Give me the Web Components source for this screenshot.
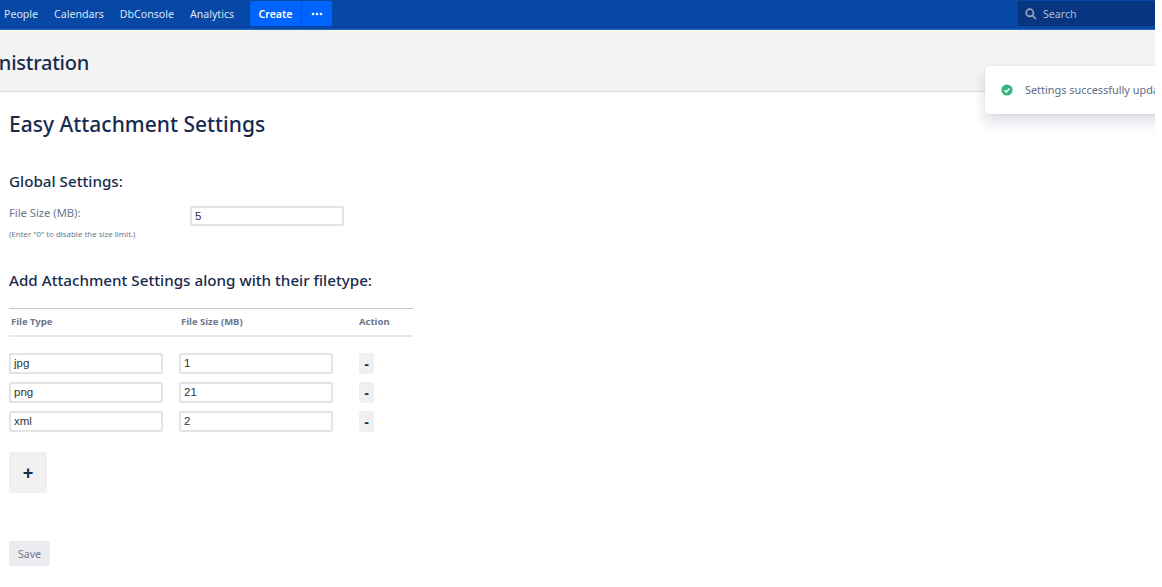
<!DOCTYPE html>
<html>
<head>
<meta charset="utf-8">
<title>Easy Attachment Settings</title>
<style>
  html, body { margin: 0; height: 100%; background: #fff; }
  body { font-family: "Noto Sans", "Open Sans", "Liberation Sans", sans-serif; color: #172b4d; overflow: hidden; }
  #clip { width: 1155px; height: 587px; overflow: hidden; position: relative; }
</style>
</head>
<body>
<div id="clip">
  <top-nav></top-nav>
  <page-header>Administration</page-header>
  <settings-page>
    <attachment-row slot="rows" type="jpg" size="1"></attachment-row>
    <attachment-row slot="rows" type="png" size="21"></attachment-row>
    <attachment-row slot="rows" type="xml" size="2"></attachment-row>
  </settings-page>
  <toast-flag>Settings successfully updated</toast-flag>
</div>

<script>
class TopNav extends HTMLElement {
  constructor() {
    super();
    this.attachShadow({mode: 'open'});
    this.shadowRoot.innerHTML = `
    <style>
      :host { display: flex; align-items: stretch; height: 30px; padding: 1px 0 0 4px; box-sizing: border-box;
        background: #0747a6; border-bottom: 1px solid #2a6ac4; font-size: 10.6px; color: #dce6f5; }
      .links { display: flex; gap: 16px; align-items: center; height: 26px; }
      .create { display: flex; margin-left: 16px; height: 25px; border-radius: 2px; overflow: hidden; background: #0065ff; color: #fff; font-weight: 600; }
      .create span { display: flex; align-items: center; justify-content: center; padding-top: 1px; box-sizing: border-box; }
      .create .main { width: 52px; border-right: 1px solid #0a56c8; }
      .create .more { width: 30px; }
      .search { margin-left: auto; width: 137px; height: 25px; background: #07357f; display: flex; align-items: center; gap: 6px; padding: 1px 0 0 7px; box-sizing: border-box; color: #aebdd6; }
    </style>
    <div class="links"><span>People</span><span>Calendars</span><span>DbConsole</span><span>Analytics</span></div>
    <div class="create">
      <span class="main">Create</span>
      <span class="more"><svg width="12" height="4" viewBox="0 0 12 4"><circle cx="2" cy="2" r="1.3" fill="#fff"/><circle cx="6" cy="2" r="1.3" fill="#fff"/><circle cx="10" cy="2" r="1.3" fill="#fff"/></svg></span>
    </div>
    <div class="search">
      <svg width="12" height="12" viewBox="0 0 12 12" fill="none" stroke="#95a5c0" stroke-width="1.7"><circle cx="4.8" cy="4.8" r="3.6"/><path d="M7.6 7.6 L11 11"/></svg>
      <span>Search</span>
    </div>`;
  }
}

class PageHeader extends HTMLElement {
  constructor() {
    super();
    this.attachShadow({mode: 'open'});
    this.shadowRoot.innerHTML = `
    <style>
      :host { display: flex; align-items: center; height: 62px; box-sizing: border-box; background: #f4f4f4; border-bottom: 1px solid #dcdcdc; overflow: hidden; white-space: nowrap; }
      h1 { margin: 3px 0 0 -50px; font-size: 20px; font-weight: 500; letter-spacing: -.25px; color: #172b4d; }
    </style>
    <h1><slot></slot></h1>`;
  }
}

class AttachmentRow extends HTMLElement {
  constructor() {
    super();
    this.attachShadow({mode: 'open'});
    this.shadowRoot.innerHTML = `
    <style>
      :host { display: flex; align-items: flex-start; height: 29px; }
      input { width: 154px; height: 21px; box-sizing: border-box; margin: 0; padding: 0 3px 1px; border: 2px solid #e3e4ea; border-radius: 2px;
        font: 11.5px "Liberation Sans", Arial, sans-serif; color: #333; background: #fff; }
      input + input { margin-left: 16px; }
      button { margin-left: 26px; width: 15px; height: 21px; padding: 0; border: 0; border-radius: 2px; background: #f0f0f0; color: #172b4d;
        font: 700 14px "Liberation Sans", Arial, sans-serif; }
    </style>
    <input class="type"><input class="size"><button>-</button>`;
    this.shadowRoot.querySelector('.type').value = this.getAttribute('type') || '';
    this.shadowRoot.querySelector('.size').value = this.getAttribute('size') || '';
  }
}

class SettingsPage extends HTMLElement {
  constructor() {
    super();
    this.attachShadow({mode: 'open'});
    this.shadowRoot.innerHTML = `
    <style>
      :host { display: block; padding: 0 0 0 9px; }
      h2 { margin: 0; padding-top: 15px; height: 50px; box-sizing: border-box; font-size: 21px; line-height: 34px; font-weight: 500; color: #172b4d; }
      h3 { margin: 0; font-size: 15.2px; line-height: 20px; font-weight: 500; color: #172b4d; }
      .global { margin-top: 29px; }
      .field { display: flex; margin-top: 15px; height: 20px; }
      .field label { width: 181px; font-size: 11.2px; line-height: 13px; color: #6b778c; }
      .field input { width: 154px; height: 20px; box-sizing: border-box; margin: 0; padding: 0 3px; border: 2px solid #e3e4ea; border-radius: 2px;
        font: 11.5px "Liberation Sans", Arial, sans-serif; color: #333; }
      .hint { margin-top: 3px; font-size: 7.9px; line-height: 11px; color: #6b778c; }
      .add { margin-top: 30px; }
      .table { width: 404px; margin-top: 18px; border-top: 1px solid #c1c7d0; }
      .head { display: grid; grid-template-columns: 170px 178px 1fr; align-items: center; border-bottom: 2px solid #e6e8ec; box-sizing: border-box; height: 28px;
        padding: 0 0 2px 2px; font-size: 9.5px; font-weight: 700; color: #6b778c; }
      .rows { margin-top: 16px; }
      .plus { display: block; margin-top: 12px; width: 38px; height: 41px; padding: 2px 0 0; border: 0; border-radius: 3px; background: #f0f0f0; color: #172b4d; font: 700 18px "Liberation Sans", Arial, sans-serif; }
      .save { display: block; margin-top: 48px; width: 41px; height: 25px; padding: 0; border: 0; border-radius: 2px; background: #ebecf0; color: #6b778c; font: 10.5px "Noto Sans", sans-serif; }
    </style>
    <h2>Easy Attachment Settings</h2>
    <h3 class="global">Global Settings:</h3>
    <div class="field"><label>File Size (MB):</label><input value="5"></div>
    <div class="hint">(Enter "0" to disable the size limit.)</div>
    <h3 class="add">Add Attachment Settings along with their filetype:</h3>
    <div class="table">
      <div class="head"><span>File Type</span><span>File Size (MB)</span><span>Action</span></div>
    </div>
    <div class="rows"><slot name="rows"></slot></div>
    <button class="plus">+</button>
    <button class="save">Save</button>`;
  }
}

class ToastFlag extends HTMLElement {
  constructor() {
    super();
    this.attachShadow({mode: 'open'});
    this.shadowRoot.innerHTML = `
    <style>
      :host { position: absolute; top: 66px; left: 985px; width: 300px; height: 48px; display: flex; align-items: center; gap: 12px; padding-left: 16px; box-sizing: border-box;
        background: #fff; border-radius: 3px; box-shadow: 0 8px 14px rgba(9,30,66,.15), 0 0 1px rgba(9,30,66,.25);
        font-size: 10.9px; color: #5e6c84; white-space: nowrap; }
      span { padding-bottom: 2px; }
    </style>
    <svg width="12" height="12" viewBox="0 0 12 12"><circle cx="6" cy="6" r="5.6" fill="#36b37e"/><path d="M3.5 6.2 L5.3 7.9 L8.5 4.4" fill="none" stroke="#fff" stroke-width="1.5"/></svg>
    <span><slot></slot></span>`;
  }
}

customElements.define('top-nav', TopNav);
customElements.define('page-header', PageHeader);
customElements.define('attachment-row', AttachmentRow);
customElements.define('settings-page', SettingsPage);
customElements.define('toast-flag', ToastFlag);
</script>
</body>
</html>
